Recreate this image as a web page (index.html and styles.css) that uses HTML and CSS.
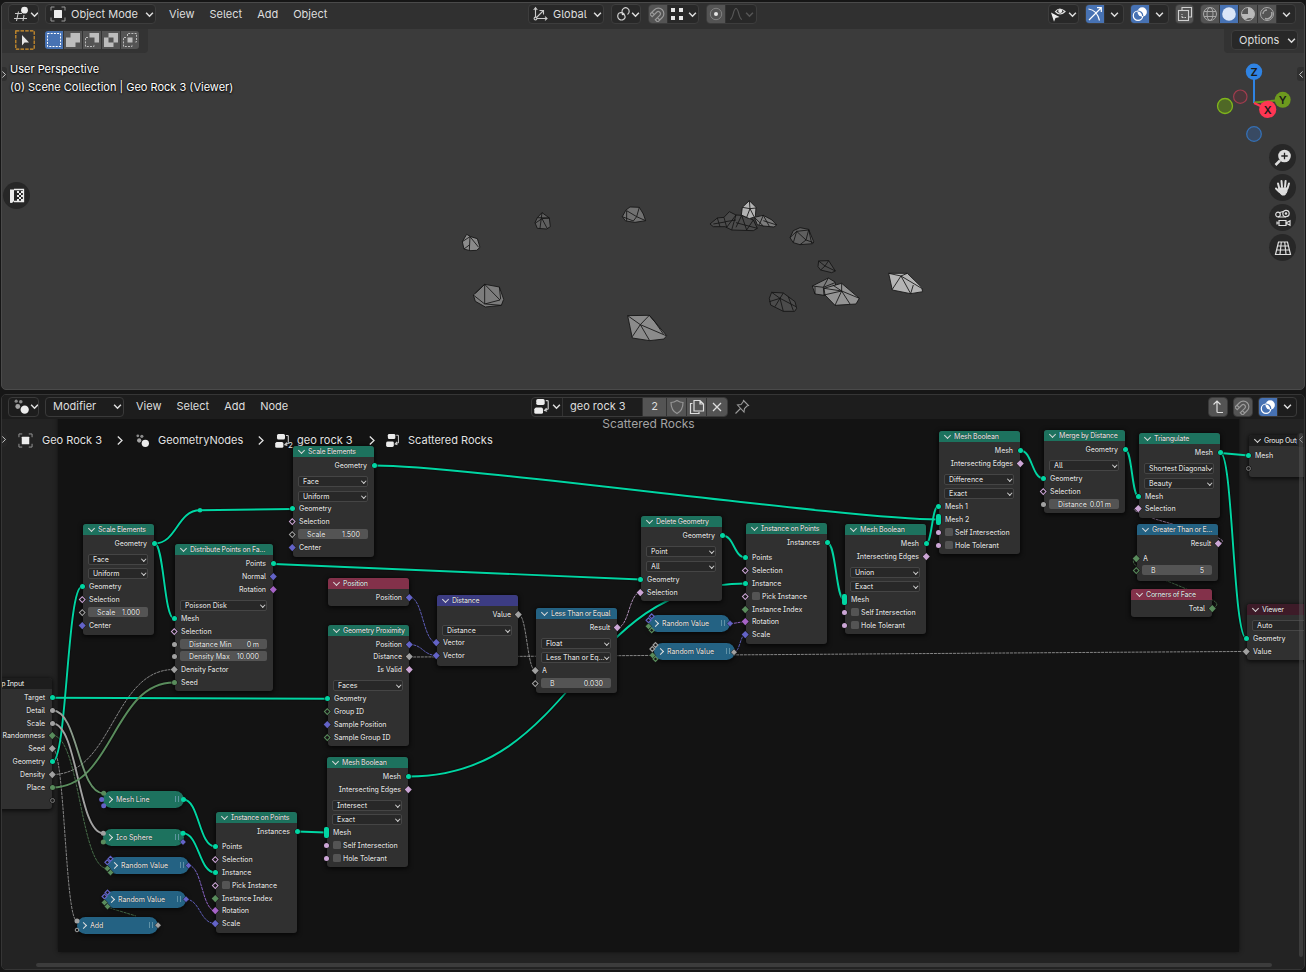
FILE: index.html
```html
<!DOCTYPE html>
<html lang="en">
<head>
<meta charset="utf-8">
<title>Geometry Nodes</title>
<link rel="stylesheet" href="styles.css">
</head>
<body>
<svg class="defs" width="0" height="0" aria-hidden="true">
  <defs>
    <symbol id="i-chev" viewBox="0 0 8 8"><path d="M1 2.4 4 5.6 7 2.4" fill="none" stroke="currentColor" stroke-width="1.3"/></symbol>
    <symbol id="i-next" viewBox="0 0 8 10"><path d="M1.8 1 6 5 1.8 9" fill="none" stroke="currentColor" stroke-width="1.3"/></symbol>
    <symbol id="i-object" viewBox="0 0 16 16"><rect x="4" y="4" width="8" height="8" rx=".6" fill="#ececec"/><path d="M1 4.5V1h3.5M11.5 1H15v3.5M15 11.5V15h-3.500M4.500 15H1v-3.500" fill="none" stroke="#9a9a9a" stroke-width="1"/></symbol>
    <symbol id="i-geo" viewBox="0 0 16 16"><circle cx="11" cy="11" r="3.900" fill="#ececec"/><circle cx="4.500" cy="8" r="2.300" fill="#a5a5a5"/><circle cx="3" cy="3" r="1.500" fill="#8a8a8a"/><circle cx="7.300" cy="3.500" r="1.700" fill="#8a8a8a"/></symbol>
    <symbol id="i-tree" viewBox="0 0 16 16"><rect x="3" y="1" width="8" height="5.500" rx="1.500" fill="#ececec"/><rect x="1.200" y="9" width="8.200" height="5.800" rx="1.500" fill="#ececec"/><path d="M1.500 5.800 3 4.500M1 9.800l1.500-1.200" stroke="#222" stroke-width=".8"/><path d="M12 2.500h1.500q.8 0 .8.800v7l-3 1.200M12.800 9.500l-2 2.200 2.500.8" fill="none" stroke="#c9c9c9" stroke-width="1.100"/></symbol>
    <symbol id="i-magnet" viewBox="0 0 16 16"><g transform="rotate(45 8 8)" fill="none" stroke="currentColor" stroke-width="1.200"><path d="M2.500 14V7.500a5.500 5.500 0 0 1 11 0V14h-3.300V7.700a2.200 2.200 0 0 0-4.400 0V14zM2.500 11h3.300M10.200 11h3.300"/></g></symbol>
    <symbol id="i-overlay" viewBox="0 0 16 16"><circle cx="10.200" cy="6" r="4.700" fill="#fff"/><circle cx="6" cy="9.700" r="4.700" fill="none" stroke="#fff" stroke-width="1.200"/><path d="M6 5a4.700 4.700 0 0 1 4.700 5" fill="none" stroke="#4772b3" stroke-width="1.200"/></symbol>
    <symbol id="dia" viewBox="-4 -4 8 8" overflow="visible"><path d="M0-3.200 3.200 0 0 3.200-3.200 0Z" stroke="#111" stroke-width=".5"/></symbol>
    <symbol id="hol" viewBox="-4 -4 8 8" overflow="visible"><path d="M0-2.400 2.400 0 0 2.400-2.400 0Z" fill="#161616" stroke="currentColor" stroke-width="1.200"/></symbol>
  </defs>
</svg>

<section class="area view3d">
  <header class="bar">
    <div class="group">
      <button class="w w-ed"><svg width="17" height="17" viewBox="0 0 17 17"><g stroke="#c9c9c9" stroke-width="1.100" fill="none"><path d="M2 7.500h7M1 12.500h13M5.500 5.500 3.500 15M11 9l-1 6"/></g><circle cx="11.500" cy="4.200" r="3.400" fill="#ececec"/></svg><svg class="chev"><use href="#i-chev"/></svg></button>
      <button class="w w-mode"><svg width="16" height="16"><use href="#i-object"/></svg><span>Object Mode</span><svg class="chev"><use href="#i-chev"/></svg></button>
      <nav class="menu"><span>View</span><span>Select</span><span>Add</span><span>Object</span></nav>
    </div>
    <div class="group">
      <button class="w w-orient"><svg width="16" height="16" viewBox="0 0 16 16" fill="none" stroke="#c9c9c9" stroke-width="1.100"><path d="M3.500 2v10.500H15M1.700 4 3.500 1.700 5.300 4M13 10.700l2 1.800-2 1.800M3.500 12.500 11 5M7.500 4.500H11.500V8.500"/><circle cx="3.500" cy="12.500" r="1.400" fill="#282828"/></svg><span>Global</span><svg class="chev"><use href="#i-chev"/></svg></button>
      <button class="w w-pivot"><svg width="16" height="16" viewBox="0 0 16 16" fill="none" stroke="#d0d0d0" stroke-width="1.200"><path d="M7 5.200a3.600 3.600 0 1 1 5.500 3.200M4.500 6.800a3.900 3.900 0 1 0 5.800 4.500"/><circle cx="8" cy="8" r="1.300" fill="#e6e6e6" stroke="none"/><path d="M7 5.200Q7 8 9.500 8.800M4.500 6.800Q9 6 10.300 11.300"/></svg><svg class="chev"><use href="#i-chev"/></svg></button>
      <div class="w split"><i class="cell lit dim"><svg width="16" height="16"><use href="#i-magnet"/></svg></i><i class="cell wide"><svg width="14" height="14" viewBox="0 0 14 14" fill="#e6e6e6"><path d="M1 1h4v4H1zM9 1h4v4H9zM1 9h4v4H1zM9 9h4v4H9z"/></svg><svg class="chev"><use href="#i-chev"/></svg></i></div>
      <div class="w split"><i class="cell lit"><svg width="16" height="16" viewBox="0 0 16 16"><circle cx="8" cy="8" r="5.700" fill="none" stroke="#828282"/><circle cx="8" cy="8" r="2" fill="#e6e6e6"/></svg></i><i class="cell wide off"><svg width="16" height="16" viewBox="0 0 16 16" fill="none" stroke="currentColor" stroke-width="1.200"><path d="M2 13.500C5.500 13 5 2.500 8 2.500s2.500 10.500 6 11"/></svg><svg class="chev"><use href="#i-chev"/></svg></i></div>
    </div>
    <div class="group right">
      <button class="w w-vis"><svg width="17" height="17" viewBox="0 0 17 17"><path d="M5.500 5.500q4-5 9.500 0-5 5-9.500 0z" fill="#333" stroke="#dedede" stroke-width="1.200"/><circle cx="10.200" cy="5" r="2" fill="#ececec"/><path d="M1 6.500 9.500 11l-4 1-1.500 3.800z" fill="#ececec"/></svg><svg class="chev"><use href="#i-chev"/></svg></button>
      <div class="w split"><i class="cell on"><svg width="16" height="16" viewBox="0 0 16 16" fill="none" stroke="#fff" stroke-width="1.200"><path d="M1.500 3Q10 4 12.500 14.500M2 14 14 2M10 1.700h4.300V6"/></svg></i><i class="cell"><svg class="chev"><use href="#i-chev"/></svg></i></div>
      <div class="w split"><i class="cell on"><svg width="16" height="16"><use href="#i-overlay"/></svg></i><i class="cell"><svg class="chev"><use href="#i-chev"/></svg></i></div>
      <div class="w split"><i class="cell lit"><svg width="16" height="16" viewBox="0 0 16 16" fill="none" stroke="#d0d0d0" stroke-width="1.100"><path d="M5 4V1.500h9.500V11H12"/><rect x="1.500" y="4.500" width="10" height="10"/><path d="M5 11.500V8M5 11.500h4" stroke-dasharray="1.500 1"/></svg></i></div>
      <div class="w split shade">
        <i class="cell lit"><svg width="16" height="16" viewBox="0 0 16 16" fill="none" stroke="#a8a8a8"><circle cx="8" cy="8" r="6.500"/><ellipse cx="8" cy="8" rx="3" ry="6.500"/><path d="M2 5.500h12M2 10.500h12"/></svg></i>
        <i class="cell on"><svg width="16" height="16" viewBox="0 0 16 16"><circle cx="8" cy="8" r="6.800" fill="#dbe6f7"/></svg></i>
        <i class="cell lit"><svg width="16" height="16" viewBox="0 0 16 16"><circle cx="8" cy="8" r="6.500" fill="#555" stroke="#b0b0b0"/><path d="M8 1.500V8H1.500Q2 12 5.500 13.800 8 11 12.500 12.500A6.500 6.500 0 0 0 8 1.500" fill="#b8b8b8"/></svg></i>
        <i class="cell lit"><svg width="16" height="16" viewBox="0 0 16 16" fill="none" stroke="#a8a8a8"><circle cx="8" cy="8" r="6.500"/><path d="M4 8a4 4 0 0 1 4-4" stroke-width="1.300"/><path d="M12.500 6a5 5 0 0 1-6.500 6.500" stroke-width="1.500"/></svg></i>
        <i class="cell"><svg class="chev"><use href="#i-chev"/></svg></i>
      </div>
    </div>
  </header>
  <div class="tools">
    <div class="tools-l">
      <svg width="20" height="20" viewBox="0 0 20 20"><rect x=".8" y=".8" width="18.400" height="18.400" fill="none" stroke="#d8952b" stroke-width="1.200" stroke-dasharray="3.500 1.200"/><path d="M7 5v10.500l2.600-3H14z" fill="#e6e6e6"/></svg>
      <div class="modes">
        <i class="on"><svg width="16" height="16" viewBox="0 0 16 16"><rect x="1.500" y="1.500" width="13" height="13" fill="none" stroke="#fff" stroke-dasharray="2 1.200"/></svg></i>
        <i><svg width="16" height="16" viewBox="0 0 16 16"><path d="M5.500 1H15v9.500h-4.500V15H1V5.500h4.500z" fill="#bdbdbd"/></svg></i>
        <i><svg width="16" height="16" viewBox="0 0 16 16"><path d="M5.500 1H15v9.500h-4.500v-5h-5z" fill="#bdbdbd"/><path d="M4 5.500H1.500v9H10V12" fill="none" stroke="#bdbdbd" stroke-dasharray="2 1.200"/></svg></i>
        <i><svg width="16" height="16" viewBox="0 0 16 16"><path fill-rule="evenodd" d="M5.500 1H15v9.500h-4.500V15H1V5.500h4.500zM5.500 5.500v5h5v-5z" fill="#bdbdbd"/></svg></i>
        <i><svg width="16" height="16" viewBox="0 0 16 16"><path d="M5.500 5.500h5v5h-5z" fill="#bdbdbd"/><path d="M5.500 4V1.500h9V10H12M4 5.500H1.500v9H10V12" fill="none" stroke="#bdbdbd" stroke-dasharray="2 1.200"/></svg></i>
      </div>
    </div>
    <div class="tools-r"><button class="w w-opt"><span>Options</span><svg class="chev"><use href="#i-chev"/></svg></button></div>
  </div>
  <div class="viewport">
    <svg class="scene" viewBox="1 60 1304 329" width="1304" height="329">
      <g transform="translate(450 190) scale(.3333)" class="rocks">
        <path class="c5" d="M50 133 62 140 82 146 90 172 80 181 60 182 42 177 37 155Z"/><path d="M60 140 58 181M60 140 86 172M37 155 60 140M42 177 58 165"/>
        <path class="c2" d="M276 68 298 84 301 110 290 117 262 115 255 98 262 83Z"/><path d="M276 68 270 115M276 86 292 116M262 83 298 84M255 100 276 86 298 84"/>
        <path class="c3" d="M517 80 528 60 540 51 568 52 580 72 587 92 555 97 527 93Z"/><path d="M530 62 530 93M530 62 560 80 587 92M568 52 560 80M517 80 550 93 560 80"/>
        <path class="c4" d="M104 283 148 291 161 328 154 346 106 351 76 334 70 315Z"/><path d="M104 283V342L150 330 104 283M70 315 104 342M76 310 104 283M148 291 152 328M106 342 154 346"/>
        <path class="c5" d="M533 377 598 376 650 437 642 447 599 452 547 444Z"/><path d="M533 377 571 404 598 376M571 404 547 440M571 404 599 452M571 404 648 437M598 376 615 396 640 432"/>
      </g>
      <g transform="translate(700 190) scale(.3333)" class="rocks">
        <path class="c1" d="M30 102 52 84 72 82 88 65 108 75 125 76 160 90 172 115 160 122 95 120 75 110 40 110Z"/><path d="M52 84 60 110M72 82 80 112 108 75 95 120M125 76 108 112M125 76 140 120 160 90M76 95 108 90M40 102 75 96M108 98 172 115"/>
        <path class="c4" d="M163 82 190 76 216 90 230 105 222 111 190 108 172 104Z"/><path d="M190 76 178 104M190 76 208 109M163 82 190 108M190 92 230 105"/>
        <path class="c7" d="M148 32 168 52 166 80 148 86 124 75 127 52Z"/><path d="M148 32 150 56 127 52M150 56 168 54M150 56 140 82M150 56 162 80"/>
        <path class="c2" d="M270 143 280 122 300 113 326 118 341 155 338 161 300 164 280 158Z"/><path d="M290 124 326 120 318 150 290 124 280 158M270 143 290 124M318 150 300 164M318 150 341 158M326 118 335 160"/>
        <path class="c1" d="M356 213 386 212 406 243 395 248 362 240 354 230Z"/><path d="M356 213 375 228 386 212M375 228 362 240M375 228 406 243"/>
        <path class="c4" d="M337 288 385 264 405 276 410 300 372 316 345 312Z"/><path d="M337 288 370 292 385 264M370 292 405 278M345 312 345 290M370 292 372 316"/>
        <path class="c6" d="M372 295 425 280 478 325 468 342 405 346 375 315Z"/><path d="M372 295 425 303 425 280M425 303 405 346M425 303 450 342M425 303 478 325M372 315 425 303M398 285 425 303"/>
        <path class="c1" d="M208 325 215 307 250 309 285 335 290 355 284 364 250 364 212 345Z"/><path d="M215 307 240 325 250 309M240 325 208 335M240 325 250 364M240 325 288 350M265 320 280 362M225 350 240 325"/>
        <path class="c7" d="M566 250 622 250 665 292 668 305 632 311 577 300Z"/><path d="M566 250 603 258 622 250M603 258 577 298M603 258 632 311M603 258 665 295M640 285 632 311"/>
      </g>
    </svg>
    <div class="info"><p>User Perspective</p><p>(0) Scene Collection | Geo Rock 3 (Viewer)</p></div>
    <svg class="gizmo" viewBox="1212 60 84 86" width="84" height="86">
      <path d="M1254 103V78" stroke="#2f83e3" stroke-width="2"/><path d="M1254 102.500 1283 100" stroke="#6d9a1e" stroke-width="2"/><path d="M1254 103l13 6" stroke="#ff3653" stroke-width="2"/>
      <circle cx="1240.300" cy="96.700" r="6.700" fill="#4b363a" stroke="#a03c4e" stroke-width="1.200"/>
      <circle cx="1225" cy="106" r="7.500" fill="#4f6826" stroke="#7fb51b" stroke-width="1.300"/>
      <circle cx="1254" cy="134" r="7.300" fill="#384a63" stroke="#3570b5" stroke-width="1.300"/>
      <circle cx="1254" cy="71.800" r="8.200" fill="#2f83e3"/><circle cx="1282.700" cy="99.800" r="8" fill="#6d9a1e"/><circle cx="1267.700" cy="109.400" r="8.600" fill="#ff3653"/>
      <g class="axis"><text x="1254" y="76">Z</text><text x="1282.700" y="104">Y</text><text x="1267.700" y="113.600">X</text></g>
    </svg>
    <div class="nav">
      <i><svg width="18" height="18" viewBox="0 0 18 18"><circle cx="10.500" cy="7" r="6.300" fill="#dedede"/><path d="M6 11.500 1.500 16" stroke="#dedede" stroke-width="2.500"/><path d="M10.500 3.800v6.400M7.300 7h6.400" stroke="#222" stroke-width="1.300"/></svg></i>
      <i><svg width="18" height="18" viewBox="0 0 18 18" fill="none" stroke="#dedede" stroke-width="2" stroke-linecap="round"><path d="M5.200 9 4 4.500M8 8 7.500 2M11 8l.6-6M13.500 9.500l1.500-5M2 9.500l3 3"/><path d="M5 9h8.500l-.7 4-2 3h-3L5 13z" fill="#dedede" stroke-width="1"/></svg></i>
      <i><svg width="18" height="18" viewBox="0 0 18 18" fill="none" stroke="#dedede" stroke-width="1.200"><circle cx="4" cy="5.500" r="2.300"/><circle cx="12" cy="4.500" r="3.200"/><circle cx="12" cy="4.500" r=".7"/><path d="M4 8h8M5 3.800 9 2.500M5 11.500h7v5H5zM12 14l4-2.200v4.400zM5 14H3M3 12.500v3"/></svg></i>
      <i><svg width="18" height="18" viewBox="0 0 18 18" fill="none" stroke="#dedede" stroke-width="1.200"><path d="M4.500 3h9l3 12.500h-15zM3.500 7h11M2.500 11h13M7.300 3 6 15.500M10.700 3 12 15.500"/></svg></i>
    </div>
    <div class="asset"><svg width="16" height="16" viewBox="0 0 16 16"><path d="M1 1.500h4V13q-2 3-4 1.500z" fill="#ececec"/><path d="M5 1.500h9.500v12H5" fill="none" stroke="#ececec" stroke-width="1.300"/><path d="M8 3h2v2H8zM12 3h2v2h-2zM10 5h2v2h-2zM8 7h2v2H8zM12 7h2v2h-2zM10 9h2v2h-2zM8 11h2v2H8zM12 11h2v2h-2z" fill="#ececec"/></svg></div>
    <div class="tab tab-l"><svg width="6" height="9" viewBox="0 0 8 10"><use href="#i-next"/></svg></div>
    <div class="tab tab-r"><svg width="6" height="9" viewBox="0 0 8 10"><use href="#i-next"/></svg></div>
  </div>
</section>

<section class="area nodes-ed">
  <header class="bar">
    <div class="group">
      <button class="w w-ed"><svg width="17" height="17"><use href="#i-geo"/></svg><svg class="chev"><use href="#i-chev"/></svg></button>
      <button class="w w-mod"><span>Modifier</span><svg class="chev"><use href="#i-chev"/></svg></button>
      <nav class="menu menu2"><span>View</span><span>Select</span><span>Add</span><span>Node</span></nav>
    </div>
    <div class="group group-id">
      <div class="w split id">
        <i class="cell c-tree"><svg width="17" height="17"><use href="#i-tree"/></svg><svg class="chev"><use href="#i-chev"/></svg></i>
        <i class="cell c-name">geo rock 3</i><i class="cell lit c-num">2</i>
        <i class="cell lit"><svg width="16" height="16" viewBox="0 0 16 16" fill="none" stroke="#959595" stroke-width="1.200"><path d="M8 1.500q3 2 6 2 0 8-6 11-6-3-6-11 3 0 6-2z"/></svg></i>
        <i class="cell lit"><svg width="16" height="16" viewBox="0 0 16 16" fill="none" stroke="#dedede" stroke-width="1.200"><path d="M5 1.500h6l3.500 3.500v7H5zM11 1.500V5h3.500M3.500 4.500h-2v10H10v-1.500"/></svg></i>
        <i class="cell lit"><svg width="14" height="14" viewBox="0 0 14 14" stroke="#dedede" stroke-width="1.300"><path d="M3 3l8 8M11 3l-8 8"/></svg></i>
      </div>
      <svg class="pin" width="16" height="16" viewBox="0 0 16 16" fill="none" stroke="#9a9a9a" stroke-width="1.100"><path d="M9.500 1.500 14.500 6.500 13 7 10.500 9.500 10 13 3.500 6 7 5.500 9 3zM6.500 9.500 1.500 14.500"/></svg>
    </div>
    <div class="group right">
      <div class="w split"><i class="cell lit"><svg width="16" height="16" viewBox="0 0 16 16" fill="none" stroke="#dedede" stroke-width="1.200"><path d="M7 2v10.500q0 1 1 1h5M3.500 5.500 7 2l3.500 3.500"/></svg></i></div>
      <div class="w split"><i class="cell lit dim"><svg width="16" height="16"><use href="#i-magnet"/></svg></i></div>
      <div class="w split"><i class="cell on"><svg width="16" height="16"><use href="#i-overlay"/></svg></i><i class="cell"><svg class="chev"><use href="#i-chev"/></svg></i></div>
    </div>
  </header>
  <div class="canvas">
    <div class="layer">
      <div class="frame"><span>Scattered Rocks</span></div>
      <svg class="links" viewBox="0 0 1306 972" width="1306" height="972">
        <defs>
          <linearGradient id="g1" gradientUnits="userSpaceOnUse" x1="52" y1="710" x2="104" y2="793"><stop offset="0" stop-color="#a1a1a1"/><stop offset="1" stop-color="#598c5c"/></linearGradient>
          <linearGradient id="g2" gradientUnits="userSpaceOnUse" x1="188" y1="0" x2="215" y2="0"><stop offset="0" stop-color="#6363c7"/><stop offset="1" stop-color="#a663c7"/></linearGradient>
        </defs>
        <g class="shadow">
          <path d="M154.500 543.500C177 543.500 177 510.300 200 510.300L293 509"/><path d="M154.500 543.500C164 543.500 164 618.500 174 618.500"/>
          <path d="M375 465.500C463 465.500 850 519.500 938 519.500"/><path d="M274 564C300 564 615 579.500 640.500 579.500"/><path d="M52.500 697.700 327.500 698.700"/>
          <path d="M52.500 761.500C67 761.500 67 586.500 82 586.500"/><path d="M408.500 776.500C577 776.500 577 583.500 745.500 583.500"/>
          <path d="M183.500 799.500C199 799.500 199 846.500 215 846.500"/><path d="M183 833.300C199 833.300 199 872.500 215 872.500"/>
          <path d="M52.500 710.500C78 710.500 78 793.300 103.700 793.300"/><path d="M52.500 723.500C78 723.500 78 833.300 103.300 833.300"/><path d="M52.500 787.500C113 787.500 113 682.500 174 682.500"/>
          <path d="M1220.500 453C1233 453 1233 638.500 1246.500 638.500"/>
        </g>
        <g class="dash">
          <path class="fl" d="M409.500 657C450 657 1200 651.500 1246 651.500"/>
          <path class="fl" d="M518.500 614.500C527 614.500 527 670.500 535.500 670.500"/>
          <path class="fl" d="M52.500 748.500C65 748.500 65 921 77 921"/><path class="fl" d="M52.500 774.500C113 774.500 113 669.500 174 669.500"/>
          <path class="in" d="M52.500 735.500C80 735.500 80 868.500 107.300 868.500"/><path class="in" d="M104 902.500Q104 907 118 910.500L136 916"/>
          <path class="ve" d="M410 597.500C423 597.500 423 643 437 643"/><path class="ve" d="M409.500 644.500C423 644.500 423 655.500 437 655.500"/>
          <path class="v2r" d="M188.500 865.500C202 865.500 202 910.500 215 910.500"/><path class="ve" d="M186 899.300C200 899.300 200 923.500 215 923.500"/>
          <path class="bo" d="M617.500 627.500C629 627.500 629 592.500 640.500 592.500"/>
          <path class="ro" d="M730 623.500C736 623.500 740 621.800 745.500 621.800"/><path class="ve" d="M734 652.300C740 652.300 740 634.500 745.500 634.500"/>
          <path class="bo" d="M1219 543.500C1230 541 1215 535 1179 526L1155 519C1130 510 1132 508.500 1138.500 508.500"/>
          <path class="in" d="M1213 608.500C1224 602 1210 599 1184 588L1171 582.500C1130 568 1130 560 1136.500 558.500"/>
        </g>
        <g class="solid">
          <path d="M154.500 543.500C177 543.500 177 510.300 200 510.300L293 509"/><path d="M154.500 543.500C164 543.500 164 618.500 174 618.500"/>
          <path d="M375 465.500C463 465.500 850 519.500 938 519.500"/><path d="M274 564C300 564 615 579.500 640.500 579.500"/><path d="M52.500 697.700 327.500 698.700"/>
          <path d="M52.500 761.500C67 761.500 67 586.500 82 586.500"/><path d="M408.500 776.500C577 776.500 577 583.500 745.500 583.500"/>
          <path d="M183.500 799.500C199 799.500 199 846.500 215 846.500"/><path d="M183 833.300C199 833.300 199 872.500 215 872.500"/><path d="M297 831.500 326 832.500"/>
          <path d="M722.500 535.500C734 535.500 734 557.500 745.500 557.500"/><path d="M827.500 543C836 543 836 599.500 844 599.500"/><path d="M926 543.500C932 543.500 932 506.500 938 506.500"/>
          <path d="M1020.500 450.500C1032 450.500 1032 478.500 1043.500 478.500"/><path d="M1125.500 450C1132 450 1132 496.500 1138.500 496.500"/><path d="M1220.500 453 1248.500 455.500"/><path d="M1220.500 453C1233 453 1233 638.500 1246.500 638.500"/>
          <path class="fl" d="M52.500 723.500C78 723.500 78 833.300 103.300 833.300"/><path class="in" d="M52.500 787.500C113 787.500 113 682.500 174 682.500"/><path class="f2i" d="M52.500 710.500C78 710.500 78 793.300 103.700 793.300"/>
          <circle cx="200" cy="510.300" r="2.300"/>
        </g>
      </svg>

      <article class="node n-scale-a"><h3>Scale Elements</h3>
        <p class="o geo">Geometry</p><p class="dd g3">Face</p><p class="dd g1">Uniform</p><p class="geo">Geometry</p><p class="bo h">Selection</p><p class="fl h"><b><u>Scale</u><u>1.000</u></b></p><p class="ve d">Center</p></article>
      <article class="node n-dist"><h3>Distribute Points on Fa...</h3>
        <p class="o geo">Points</p><p class="o ve d">Normal</p><p class="o ro d">Rotation</p><p class="dd g3">Poisson Disk</p><p class="geo">Mesh</p><p class="bo h">Selection</p><p class="fl"><b><u>Distance Min</u><u>0 m</u></b></p><p class="fl up"><b><u>Density Max</u><u>10.000</u></b></p><p class="fl d">Density Factor</p><p class="in">Seed</p></article>
      <article class="node n-scale-b"><h3>Scale Elements</h3>
        <p class="o geo">Geometry</p><p class="dd g3">Face</p><p class="dd g2">Uniform</p><p class="geo up">Geometry</p><p class="bo h">Selection</p><p class="fl h"><b><u>Scale</u><u>1.500</u></b></p><p class="ve d">Center</p></article>
      <article class="node red n-pos"><h3>Position</h3><p class="o ve d">Position</p></article>
      <article class="node n-prox"><h3>Geometry Proximity</h3>
        <p class="o ve d">Position</p><p class="o fl d up">Distance</p><p class="o bo d">Is Valid</p><p class="dd g3">Faces</p><p class="geo">Geometry</p><p class="in h">Group ID</p><p class="ve d">Sample Position</p><p class="in h">Sample Group ID</p></article>
      <article class="node n-bool-c"><h3>Mesh Boolean</h3>
        <p class="o geo">Mesh</p><p class="o bo d">Intersecting Edges</p><p class="dd g3">Intersect</p><p class="dd g1">Exact</p><p class="geo m">Mesh</p><p class="bo"><em></em>Self Intersection</p><p class="bo"><em></em>Hole Tolerant</p></article>
      <article class="node n-inst-b"><h3>Instance on Points</h3>
        <p class="o geo">Instances</p><p class="geo g2">Points</p><p class="bo h">Selection</p><p class="geo">Instance</p><p class="bo h"><em></em>Pick Instance</p><p class="in d">Instance Index</p><p class="ro d up">Rotation</p><p class="ve d">Scale</p></article>
      <article class="node blue n-distance"><h3>Distance</h3>
        <p class="o fl d">Value</p><p class="dd g3">Distance</p><p class="ve d up">Vector</p><p class="ve d">Vector</p></article>
      <article class="node teal n-less"><h3>Less Than or Equal</h3>
        <p class="o bo d">Result</p><p class="dd g3">Float</p><p class="dd g1">Less Than or Eq...</p><p class="fl d">A</p><p class="fl h"><b><u>B</u><u>0.030</u></b></p></article>
      <article class="node n-delete"><h3>Delete Geometry</h3>
        <p class="o geo">Geometry</p><p class="dd g3">Point</p><p class="dd g2">All</p><p class="geo">Geometry</p><p class="bo d">Selection</p></article>
      <article class="node n-inst-a"><h3>Instance on Points</h3>
        <p class="o geo">Instances</p><p class="geo g2">Points</p><p class="bo h">Selection</p><p class="geo">Instance</p><p class="bo h"><em></em>Pick Instance</p><p class="in d">Instance Index</p><p class="ro d up">Rotation</p><p class="ve d">Scale</p></article>
      <article class="node n-bool-b"><h3>Mesh Boolean</h3>
        <p class="o geo">Mesh</p><p class="o bo d">Intersecting Edges</p><p class="dd g3">Union</p><p class="dd g1">Exact</p><p class="geo m">Mesh</p><p class="bo"><em></em>Self Intersection</p><p class="bo"><em></em>Hole Tolerant</p></article>
      <article class="node n-bool-a"><h3>Mesh Boolean</h3>
        <p class="o geo">Mesh</p><p class="o bo d">Intersecting Edges</p><p class="dd g3">Difference</p><p class="dd g1">Exact</p><p class="geo">Mesh 1</p><p class="geo m">Mesh 2</p><p class="bo"><em></em>Self Intersection</p><p class="bo"><em></em>Hole Tolerant</p></article>
      <article class="node n-merge"><h3>Merge by Distance</h3>
        <p class="o geo">Geometry</p><p class="dd g3">All</p><p class="geo">Geometry</p><p class="bo h">Selection</p><p class="fl"><b><u>Distance</u><u>0.01 m</u></b></p></article>
      <article class="node n-tri"><h3>Triangulate</h3>
        <p class="o geo">Mesh</p><p class="dd g3">Shortest Diagonal</p><p class="dd g2">Beauty</p><p class="geo">Mesh</p><p class="bo d up">Selection</p></article>
      <article class="node teal n-greater"><h3>Greater Than or E...</h3>
        <p class="o bo d">Result</p><p class="in d g2">A</p><p class="in h up"><b><u>B</u><u>5</u></b></p></article>
      <article class="node red n-corners"><h3>Corners of Face</h3><p class="o in d">Total</p></article>
      <article class="node wine n-viewer"><h3>Viewer</h3><p class="dd g1">Auto</p><p class="geo">Geometry</p><p class="fl d">Value</p></article>
      <article class="node plain n-out"><h3>Group Output</h3><p class="geo">Mesh</p><p class="virt"></p></article>
      <article class="node plain n-in"><h3>Group Input</h3>
        <p class="o geo">Target</p><p class="o fl">Detail</p><p class="o fl">Scale</p><p class="o in d up">Randomness</p><p class="o fl d">Seed</p><p class="o geo">Geometry</p><p class="o fl d">Density</p><p class="o in">Place</p><p class="o virt"></p></article>

      <div class="pill n-line">Mesh Line</div>
      <div class="pill n-ico">Ico Sphere</div>
      <div class="pill blu n-rand1">Random Value</div>
      <div class="pill blu n-rand2">Random Value</div>
      <div class="pill blu n-add">Add</div>
      <div class="pill blu n-rand3">Random Value</div>
      <div class="pill blu n-rand4">Random Value</div>

      <svg class="sockets" viewBox="0 0 1306 972" width="1306" height="972">
        <g fill="#598c5c"><circle cx="103.700" cy="793.300" r="2.500"/><circle cx="103.300" cy="842" r="2.500"/></g>
        <g fill="#6363c7"><circle cx="101.700" cy="799.500" r="2.500"/><circle cx="103.700" cy="805.800" r="2.500"/></g>
        <g fill="#00d6a3"><circle cx="183.500" cy="799.500" r="2.500"/><circle cx="183" cy="833.300" r="2.500"/></g>
        <g fill="#a1a1a1"><circle cx="103.300" cy="833.300" r="2.500"/><circle cx="77" cy="921" r="2.500"/></g>
        <circle cx="77" cy="930" r="1.800" fill="#161616" stroke="#a1a1a1"/>
        <g fill="#6363c7" color="#6363c7">
          <use href="#dia" x="179" y="838" width="8" height="8"/><use href="#dia" x="184.500" y="861.500" width="8" height="8"/><use href="#dia" x="182" y="895.300" width="8" height="8"/><use href="#dia" x="726" y="619.500" width="8" height="8"/>
          <use href="#hol" x="106.500" y="854.700" width="8" height="8"/><use href="#hol" x="103.300" y="858.300" width="8" height="8"/><use href="#hol" x="103.500" y="888.500" width="8" height="8"/><use href="#hol" x="100.500" y="892.500" width="8" height="8"/><use href="#hol" x="647.700" y="612.300" width="8" height="8"/><use href="#hol" x="644.500" y="616.300" width="8" height="8"/>
        </g>
        <g fill="#598c5c" color="#598c5c">
          <use href="#dia" x="103.300" y="864.500" width="8" height="8"/><use href="#dia" x="106.500" y="868.500" width="8" height="8"/><use href="#dia" x="100.500" y="898.500" width="8" height="8"/><use href="#dia" x="103.500" y="902.500" width="8" height="8"/><use href="#dia" x="644.500" y="622.300" width="8" height="8"/><use href="#dia" x="648.500" y="651.300" width="8" height="8"/>
          <use href="#hol" x="647.700" y="626.300" width="8" height="8"/><use href="#hol" x="651.500" y="655" width="8" height="8"/>
        </g>
        <g fill="#a1a1a1" color="#a1a1a1"><use href="#dia" x="154" y="921.300" width="8" height="8"/><use href="#dia" x="730" y="648.300" width="8" height="8"/><use href="#hol" x="651.500" y="641" width="8" height="8"/><use href="#hol" x="648.300" y="645" width="8" height="8"/></g>
      </svg>
    </div>
    <div class="crumbs">
      <span class="cr cr1"><svg width="15" height="15"><use href="#i-object"/></svg>Geo Rock 3</span><svg class="sep"><use href="#i-next"/></svg>
      <span class="cr cr2"><svg width="15" height="15"><use href="#i-geo"/></svg>GeometryNodes</span><svg class="sep"><use href="#i-next"/></svg>
      <span class="cr cr3"><svg width="16" height="16"><use href="#i-tree"/></svg><sub>2</sub>geo rock 3</span><svg class="sep"><use href="#i-next"/></svg>
      <span class="cr cr4"><svg width="15" height="15"><use href="#i-tree"/></svg>Scattered Rocks</span>
    </div>
    <div class="tab tab-l tab2"><svg width="6" height="9" viewBox="0 0 8 10"><use href="#i-next"/></svg></div>
    <div class="tab tab-r tab2"><svg width="6" height="9" viewBox="0 0 8 10"><use href="#i-next"/></svg></div>
    <div class="sb-v"></div><div class="sb-h"></div>
  </div>
</section>
</body>
</html>
```

FILE: styles.css
```css
*, *::before, *::after { box-sizing: border-box; }
body {
  margin: 0; width: 1306px; height: 972px; overflow: hidden;
  background: #161616; color: #dedede;
  font: 11px/1 Inter, "Liberation Sans", sans-serif;
  font-feature-settings: "cv05", "cv08";
  padding: 2px 1px; display: flex; flex-direction: column; gap: 4px;
}
i { font-style: normal; }
p, h3 { margin: 0; font-weight: 400; }
svg { display: block; flex: none; }
.defs { position: absolute; }
button { font: inherit; font-feature-settings: inherit; color: inherit; padding: 0; white-space: nowrap; }

.area { position: relative; border: 1px solid #4a4a4a; border-radius: 5px; overflow: hidden; width: 1304px; }
.view3d { height: 388px; background: #3b3b3b; }
.nodes-ed { height: 577px; background: #1d1d1d; border-color: #353535; }

/* header bars */
.bar { height: 26px; display: grid; grid-template-columns: 518px 1fr auto; padding: 0 8px; background: #303030; }
.nodes-ed .bar { background: #1d1d1d; padding: 1px 7px 0 8px; height: 24px; }
.group { display: flex; gap: 7px; align-items: flex-start; padding-top: 1px; }
.group:first-child { gap: 6px; margin-left: -2px; }
.group.right { gap: 6px; }
.nodes-ed .group.right { gap: 5px; }
.w { display: flex; align-items: center; height: 20px; border: 1px solid #3d3d3d; border-radius: 4px; background: #282828; overflow: hidden; }
.nodes-ed .w { background: #1d1d1d; border-color: #3a3a3a; }
.chev { width: 9px; height: 9px; margin-left: auto; }
.w-ed { width: 31px; padding: 0 1px 0 4px; }
.w-mode { width: 111px; padding: 0 1px 0 4px; gap: 5px; }
.w-mod { width: 79px; padding: 0 1px 0 7px; }
.w-orient { width: 76px; padding: 0 1px 0 3px; gap: 5px; }
.w-pivot { width: 30px; padding: 0 1px 0 3px; }
.w-vis { width: 31px; padding: 0 1px 0 1px; }
.w-opt { width: 67px; height: 20px; padding: 0 1px 0 7px; }
.menu { display: flex; align-items: center; height: 20px; gap: 15px; padding-left: 7px; }
.menu2 { padding-left: 6px; }
.cell { display: flex; align-items: center; justify-content: center; width: 19px; height: 100%; border-right: 1px solid #333; }
.cell:last-child { border-right: 0; width: 18px; }
.cell .chev { margin: 0; }
.cell.wide { width: 30px; gap: 4px; }
.cell.lit { background: #545454; }
.cell.on { background: #4772b3; }
.cell.dim { color: #999; }
.cell.off { color: #565656; gap: 1px; }
.split .cell:only-child { width: 17px; }
.nodes-ed .split .cell:only-child { width: 18px; }
.shade { width: 96px; }
.id .cell { width: 20px; }
.id .cell.c-tree { width: 31px; gap: 2px; }
.id .cell.c-name { width: 80px; justify-content: flex-start; padding-left: 7px; }
.id .cell.c-num { width: 24px; }
.group-id { padding-left: 3px; gap: 6px; }
.pin { margin-top: 2px; }

/* tool settings */
.tools { position: relative; display: flex; justify-content: space-between; height: 24px; }
.tools-l { width: 146px; background: #333; border-radius: 0 0 4px 0; display: flex; align-items: flex-start; padding: 1px 0 0 13px; gap: 10px; }
.tools-r { width: 80px; background: #333; border-radius: 0 0 0 4px; padding: 1px 0 0 7px; }
.modes { display: flex; gap: 1px; padding-top: 1px; }
.modes i { width: 18px; height: 18px; background: #545454; display: flex; align-items: center; justify-content: center; }
.modes i:first-child { border-radius: 3px 0 0 3px; } .modes i:last-child { border-radius: 0 3px 3px 0; }
.modes i.on { background: #4772b3; }

.viewport { position: relative; height: 336px; }
.scene { position: absolute; left: -1px; top: 7px; }
.rocks path { fill: none; stroke: #141414; stroke-width: 2.6; stroke-linejoin: round; }
.rocks .c1 { fill: #4b4b4b; } .rocks .c2 { fill: #5f5f5f; } .rocks .c3 { fill: #717171; } .rocks .c4 { fill: #7c7c7c; }
.rocks .c5 { fill: #8b8b8b; } .rocks .c6 { fill: #949494; } .rocks .c7 { fill: #b4b4b4; }
.info { position: relative; padding: 9px 0 0 8px; color: #fff; text-shadow: 0 0 2px #000, 0 1px 2px #000; }
.info p { height: 18px; line-height: 14px; }
.gizmo { position: absolute; right: 8px; top: 7px; }
.axis text { font-size: 11px; font-weight: 600; text-anchor: middle; fill: #1a1a1a; }
.nav { position: absolute; right: 8px; top: 91px; display: flex; flex-direction: column; gap: 3px; }
.nav i, .asset { width: 27px; height: 27px; border-radius: 50%; background: #272727; display: flex; align-items: center; justify-content: center; }
.asset { position: absolute; left: 1px; top: 129px; }
.tab { position: absolute; width: 7px; height: 14px; background: #303030; display: flex; align-items: center; justify-content: center; top: 14px; color: #ccc; }
.tab-l { left: -2px; border-radius: 0 3px 3px 0; } .tab-r { right: 0; border-radius: 3px 0 0 3px; } .tab-r svg { transform: scaleX(-1); }
.tab2 { top: 14px; background: #262626; }

/* node canvas */
.canvas { position: relative; height: 551px; background: #232323; overflow: hidden; }
.layer { position: absolute; left: -2px; top: -419px; width: 1306px; height: 972px; }
.frame { position: absolute; left: 58px; top: 400px; width: 1181px; height: 552px; background: #131313; box-shadow: 0 0 4px #111; text-align: center; color: #a3a3a3; padding-top: 18px; }
.frame span { font-size: 12px; }
.links, .sockets { position: absolute; inset: 0; }
.links path { fill: none; }
.shadow path { stroke: #0b0b0b; stroke-width: 4; opacity: .6; }
.solid path { stroke: #00d6a3; stroke-width: 1.9; }
.solid circle { fill: #00d6a3; }
.dash path { stroke-width: 1; stroke-dasharray: 3 .8; }
.links .fl { stroke: #a1a1a1; } .links .in { stroke: #598c5c; } .links .ve { stroke: #5d5db8; } .links .bo { stroke: #a98bb2; } .links .ro { stroke: #8f62c0; }
.links .f2i { stroke: url(#g1); } .links .v2r { stroke: url(#g2); }
.dash .fl { opacity: .8; } .dash .in { opacity: .75; }

.node { position: absolute; display: flex; flex-direction: column; width: 82px; background: #303030; border-radius: 3px; box-shadow: 0 1px 4px 1px rgba(0,0,0,.65); font-size: 7px; letter-spacing: -.08px; font-weight: 500; color: #dcdcdc; text-shadow: 0 0 1px rgba(0,0,0,.7); }
.node h3 { position: relative; flex: none; height: 11px; line-height: 11px; font-size: 7px; font-weight: 500; letter-spacing: -.25px; background: #1d725e; padding-left: 15px; margin-bottom: 2px; border-radius: 3px 3px 0 0; white-space: nowrap; overflow: hidden; }
.node h3::before { content: ""; position: absolute; left: 5.500px; top: 2px; width: 5px; height: 5px; border: solid #d8d8d8; border-width: 0 1px 1px 0; transform: rotate(45deg); }
.red h3 { background: #83314a; } .blue h3 { background: #3c3c83; } .teal h3 { background: #246283; } .wine h3 { background: #3d1b28; } .plain h3 { background: #1d1d1d; }
.node p { position: relative; flex: none; height: 13px; line-height: 13px; padding: 0 6px; white-space: nowrap; display: flex; align-items: center; font-weight: 500; }
.node .o { justify-content: flex-end; padding-right: 7px; }
.node .g1 { margin-top: 1px; } .node .g2 { margin-top: 2px; } .node .g3 { margin-top: 3px; } .node .up { margin-top: -1px; }
.node .dd { height: 11px; line-height: 11px; margin: 1px 6px 1px 5px; padding: 0 4px; border: 1px solid #454545; border-radius: 2px; background: #282828; overflow: hidden; }
.node .dd.g1 { margin-top: 2px; } .node .dd.g2 { margin-top: 3px; } .node .dd.g3 { margin-top: 4px; }
.node .dd::after { content: ""; position: absolute; right: 2px; top: 2px; width: 3.500px; height: 3.500px; border: solid #d0d0d0; border-width: 0 1px 1px 0; transform: rotate(45deg); }
.node b { flex: 1; display: flex; justify-content: space-between; height: 10px; line-height: 11px; padding: 0 8px 0 9px; background: #545454; border-radius: 2px; font-weight: 500; margin: 0 0 0 -1px; }
.node u { text-decoration: none; }
.node em { width: 8px; height: 8px; background: #545454; border-radius: 1.500px; margin-right: 2px; }
/* sockets: round by default, d = diamond, h = hollow diamond, m = multi-input */
.node p:not(.dd)::before { content: ""; position: absolute; left: -3px; top: 4px; width: 5px; height: 5px; border-radius: 50%; background: var(--s); box-shadow: 0 0 0 .5px #151515; }
.node p.o:not(.dd)::before { left: auto; right: -3px; }
.node p.d:not(.dd)::before, .node p.h:not(.dd)::before { border-radius: 0; width: 4.500px; height: 4.500px; top: 4.250px; transform: rotate(45deg); margin: 0 .25px; }
.node p.h:not(.dd)::before { background: #161616; border: 1px solid var(--s); }
.node p.m:not(.dd)::before { border-radius: 2px; height: 11px; top: 1px; }
.node p.virt::before { background: #202020 !important; border: 1px solid #777; }
.geo { --s: #00d6a3; } .fl { --s: #a1a1a1; } .ve { --s: #6363c7; } .bo { --s: #cca6d6; } .in { --s: #598c5c; } .ro { --s: #a663c7; }

.n-scale-a { left: 83px; top: 524px; width: 71px; height: 111px; }
.n-dist { left: 175px; top: 544px; width: 98px; height: 147px; }
.n-scale-b { left: 293px; top: 446px; width: 81px; height: 111px; }
.n-pos { left: 328px; top: 578px; width: 81px; height: 28px; }
.n-prox { left: 328px; top: 625px; width: 81px; height: 121px; }
.n-bool-c { left: 327px; top: 757px; width: 81px; height: 110px; }
.n-inst-b { left: 216px; top: 812px; width: 81px; height: 121px; }
.n-distance { left: 437px; top: 595px; width: 81px; height: 71px; }
.n-less { left: 536px; top: 608px; width: 81px; height: 85px; }
.n-delete { left: 641px; top: 516px; width: 81px; height: 85px; }
.n-inst-a { left: 746px; top: 523px; width: 81px; height: 121px; }
.n-bool-b { left: 845px; top: 524px; width: 81px; height: 110px; }
.n-bool-a { left: 939px; top: 431px; width: 81px; height: 123px; }
.n-merge { left: 1044px; top: 430px; width: 81px; height: 83px; }
.n-tri { left: 1139px; top: 433px; width: 81px; height: 85px; }
.n-greater { left: 1137px; top: 524px; width: 81px; height: 57px; }
.n-corners { left: 1131px; top: 589px; width: 81px; height: 28px; }
.n-viewer { left: 1247px; top: 604px; height: 56px; }
.n-out { left: 1249px; top: 435px; height: 42px; }
.n-out h3, .n-viewer h3 { margin-bottom: 3px; }
.n-in { left: -29px; top: 678px; width: 81px; height: 131px; }

.pill { position: absolute; width: 81px; height: 17px; line-height: 17px; border-radius: 9px; background: #1d725e; font-size: 7px; font-weight: 500; letter-spacing: -.1px; color: #dcdcdc; padding-left: 13px; box-shadow: 0 1px 4px 1px rgba(0,0,0,.6); text-shadow: 0 0 1px rgba(0,0,0,.7); }
.blu { background: #246283; }
.pill::before { content: ""; position: absolute; left: 4px; top: 6px; width: 5px; height: 5px; border: solid #e0e0e0; border-width: 1px 1px 0 0; transform: rotate(45deg); }
.pill::after { content: ""; position: absolute; right: 5px; top: 5.500px; width: 4px; height: 6px; border: solid #6f9fb0; border-width: 0 1px; opacity: .8; }
.n-line { left: 103px; top: 791px; } .n-ico { left: 103px; top: 829px; } .n-rand1 { left: 108px; top: 857px; }
.n-rand2 { left: 105px; top: 891px; } .n-add { left: 77px; top: 917px; } .n-rand3 { left: 649px; top: 615px; } .n-rand4 { left: 654px; top: 643px; }

.crumbs { position: absolute; left: 16px; top: 14px; height: 16px; display: flex; align-items: center; color: #e2e2e2; text-shadow: 0 0 2px #000; }
.cr { display: flex; align-items: center; gap: 8px; height: 16px; position: relative; }
.cr1 { width: 100px; gap: 9px; } .cr2 { width: 124px; margin-left: 11px; } .cr3 { width: 96px; margin-left: 9px; gap: 7px; } .cr4 { margin-left: 9px; }
.sep { width: 8px; height: 11px; margin-left: -2px; }
.cr sub { position: absolute; left: 14px; top: 8px; font-size: 8px; }
.sb-v { position: absolute; right: 1px; top: 14px; width: 4px; height: 524px; border-radius: 2px; background: rgba(90,90,90,.45); }
.sb-h { position: absolute; left: 34px; bottom: 3px; width: 1236px; height: 4px; border-radius: 2px; background: rgba(90,90,90,.45); }
```
